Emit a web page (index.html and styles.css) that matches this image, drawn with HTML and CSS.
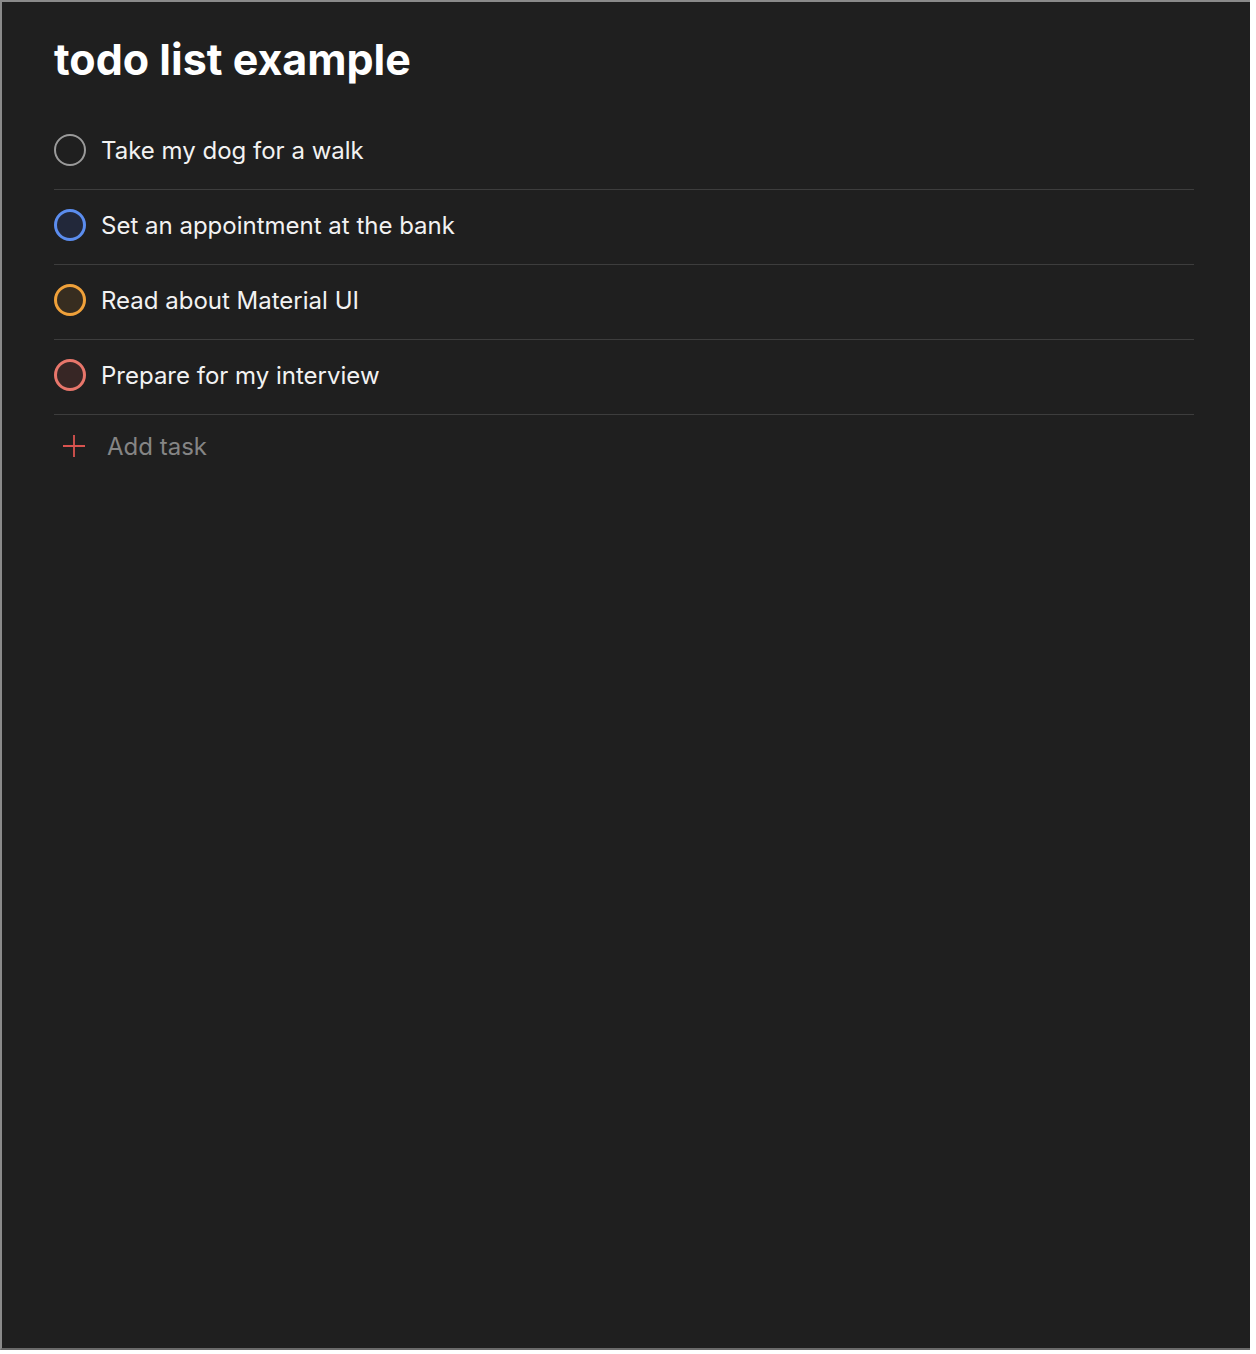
FILE: index.html
```html
<!DOCTYPE html>
<html lang="en">
<head>
<meta charset="utf-8">
<title>todo list example</title>
<link rel="stylesheet" href="styles.css">
</head>
<body>
<div class="frame">
  <main class="app">
    <h1 class="title">todo list example</h1>
    <ul class="tasks">
      <li class="task">
        <span class="check check-grey"></span>
        <span class="label">Take my dog for a walk</span>
      </li>
      <li class="task">
        <span class="check check-blue"></span>
        <span class="label">Set an appointment at the bank</span>
      </li>
      <li class="task">
        <span class="check check-orange"></span>
        <span class="label">Read about Material UI</span>
      </li>
      <li class="task">
        <span class="check check-red"></span>
        <span class="label">Prepare for my interview</span>
      </li>
    </ul>
    <div class="add">
      <svg class="plus" width="24" height="24" viewBox="0 0 24 24" aria-hidden="true">
        <path d="M12 1v22M1 12h22" stroke="#d9534f" stroke-width="1.8" fill="none"/>
      </svg>
      <span class="add-label">Add task</span>
    </div>
  </main>
</div>
</body>
</html>
```

FILE: styles.css
```css
html, body {
  margin: 0;
  padding: 0;
  background: #ffffff;
}

.frame {
  box-sizing: border-box;
  width: 1250px;
  height: 1350px;
  background: #1f1f1f;
  border-top: 2px solid #8a8a8a;
  border-left: 2px solid #8a8a8a;
  border-bottom: 2px solid #6a6a6a;
  font-family: Inter, "Noto Sans", sans-serif;
}

.app {
  width: 1140px;
  margin-left: 52px;
  padding-top: 29px;
}

.title {
  margin: 0;
  font-size: 43px;
  line-height: 56px;
  font-weight: 700;
  color: #ffffff;
  height: 84px;
}

.tasks {
  list-style: none;
  margin: 0;
  padding: 0;
}

.task {
  box-sizing: border-box;
  display: flex;
  align-items: center;
  gap: 15px;
  height: 75px;
  padding-bottom: 4px;
  border-bottom: 1px solid #3d3d3d;
}

.check {
  box-sizing: border-box;
  flex: none;
  width: 32px;
  height: 32px;
  border-radius: 50%;
}

.check-grey {
  border: 2px solid #9a9a9a;
}

.check-blue {
  border: 3px solid #5b8def;
  background: #22283a;
}

.check-orange {
  border: 3px solid #f0a13a;
  background: #372d20;
}

.check-red {
  border: 3px solid #e8766b;
  background: #372625;
}

.label {
  font-size: 24px;
  color: #f2f2f2;
}

.add {
  display: flex;
  align-items: center;
  gap: 21px;
  height: 62px;
  padding-left: 8px;
}

.plus {
  flex: none;
}

.add-label {
  font-size: 24px;
  color: #858585;
}
```
